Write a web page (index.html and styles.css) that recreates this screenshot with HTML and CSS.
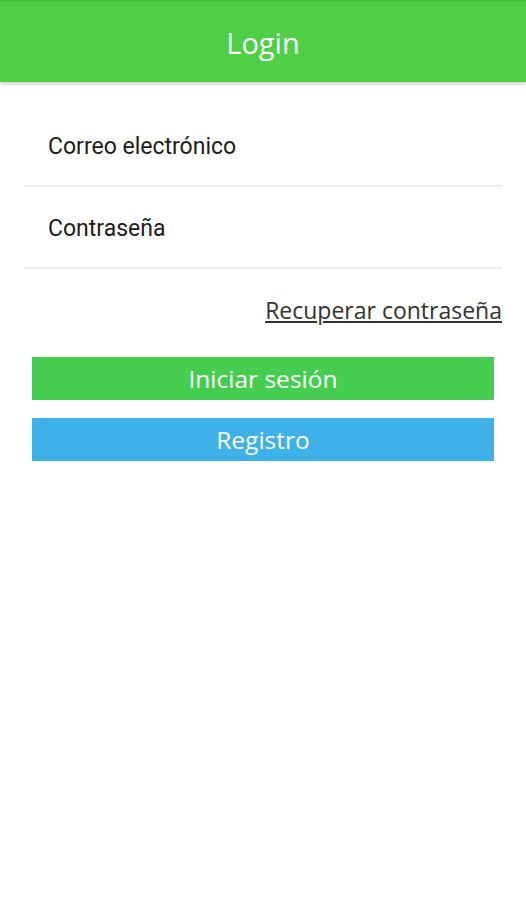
FILE: index.html
```html
<!DOCTYPE html>
<html lang="es">
<head>
    <meta charset="UTF-8">
    <meta name="viewport" content="width=device-width, initial-scale=1.0">
    <title>Login</title>
    <link rel="stylesheet" href="styles.css">
</head>
<body>
    <header class="topbar">
        <h1>Login</h1>
    </header>
    <main class="content">
        <form class="login-form" onsubmit="return false;">
            <label class="field">
                <input type="email" placeholder="Correo electrónico">
            </label>
            <label class="field">
                <input type="password" placeholder="Contraseña">
            </label>
            <div class="forgot">
                <a href="#">Recuperar contraseña</a>
            </div>
            <div class="actions">
                <button type="submit" class="btn btn-login">Iniciar sesión</button>
                <button type="button" class="btn btn-register">Registro</button>
            </div>
        </form>
    </main>
</body>
</html>
```

FILE: styles.css
```css
html, body {
    margin: 0;
    padding: 0;
    height: 100%;
}
body {
    font-family: "Open Sans", sans-serif;
    background: #fff;
}
.topbar {
    height: 82px;
    background: #4fcf45;
    border-top: 2px solid #47c23e;
    box-sizing: border-box;
    display: flex;
    align-items: center;
    justify-content: center;
    box-shadow: 0 2px 4px rgba(0,0,0,0.2);
    position: relative;
}
.topbar h1 {
    margin: 0;
    color: #fff;
    font-weight: normal;
    font-size: 29px;
}
.content {
    padding: 23px 24px 0 24px;
}
.field {
    display: block;
    border-bottom: 2px solid #ececec;
}
.field input {
    display: block;
    width: 100%;
    box-sizing: border-box;
    border: none;
    outline: none;
    background: transparent;
    height: 80px;
    padding: 2px 24px 0 24px;
    font-family: Roboto, sans-serif;
    font-size: 23px;
    color: #222;
}
.field input::placeholder {
    color: #1c1c1c;
}
.forgot {
    text-align: right;
    padding-top: 25px;
}
.forgot a {
    color: #333;
    font-size: 23px;
    text-decoration: underline;
}
.actions {
    display: flex;
    flex-direction: column;
    gap: 18px;
    padding: 31px 8px 0 8px;
}
.btn {
    height: 43px;
    border: none;
    border-radius: 0;
    color: #fff;
    font-family: "Open Sans", sans-serif;
    font-size: 24.5px;
    cursor: pointer;
}
.btn-login {
    background: #45cd50;
}
.btn-register {
    background: #3eb1e8;
}
```
